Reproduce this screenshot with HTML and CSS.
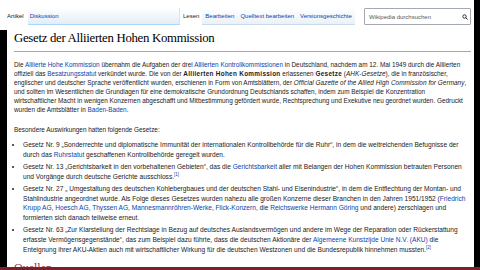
FILE: index.html
```html
<!DOCTYPE html>
<html lang="de">
<head>
    <meta charset="UTF-8">
    <meta name="viewport" content="width=device-width, initial-scale=1.0">
    <title>Gesetz der Alliierten Hohen Kommission</title>
    <link rel="stylesheet" href="styles.css">
</head>
<body>
    <div class="frame">
        <div class="edge-left"></div>
        <div class="page">
            <div class="tabs">
                <div class="tabs-left">
                    <span class="tab selected">Artikel</span>
                    <a class="tab grow" href="#">Diskussion</a>
                </div>
                <div class="tabs-right">
                    <span class="tab selected">Lesen</span>
                    <a class="tab" href="#">Bearbeiten</a>
                    <a class="tab" href="#">Quelltext bearbeiten</a>
                    <a class="tab" href="#">Versionsgeschichte</a>
                </div>
                <div class="search">
                    <span class="search-text">Wikipedia durchsuchen</span>
                    <svg class="search-icon" width="6" height="6" viewBox="0 0 12 12">
                        <circle cx="5" cy="5" r="3.4" fill="none" stroke="#222" stroke-width="1.8"/>
                        <line x1="7.4" y1="7.4" x2="11" y2="11" stroke="#222" stroke-width="2"/>
                    </svg>
                </div>
            </div>

            <div class="content">
                <h1>Gesetz der Alliierten Hohen Kommission</h1>

                <p>Die <a href="#">Alliierte Hohe Kommission</a> übernahm die Aufgaben der drei <a href="#">Alliierten</a> <a href="#">Kontrollkommissionen</a> in Deutschland, nachdem am 12. Mai 1949 durch die Alliierten offiziell das <a href="#">Besatzungsstatut</a> verkündet wurde. Die von der <b>Alliierten Hohen Kommission</b> erlassenen <b>Gesetze</b> (<i>AHK-Gesetze</i>), die in französischer, englischer und deutscher Sprache veröffentlicht wurden, erschienen in Form von Amtsblättern, der <i>Official Gazette of the Allied High Commission for Germany</i>, und sollten im Wesentlichen die Grundlagen für eine demokratische Grundordnung Deutschlands schaffen, indem zum Beispiel die Konzentration<br>wirtschaftlicher Macht in wenigen Konzernen abgeschafft und Mitbestimmung gefördert wurde, Rechtsprechung und Exekutive neu geordnet wurden. Gedruckt<br>wurden die Amtsblätter in <a href="#">Baden-Baden</a>.</p>

                <p class="lead">Besondere Auswirkungen hatten folgende Gesetze:</p>

                <ul>
                    <li>Gesetz Nr. 9 „Sonderrechte und diplomatische Immunität der internationalen Kontrollbehörde für die Ruhr“, in dem die weitreichenden Befugnisse der durch das <a href="#">Ruhrstatut</a> geschaffenen Kontrollbehörde geregelt wurden.</li>
                    <li>Gesetz Nr. 13 „Gerichtsbarkeit in den vorbehaltenen Gebieten“, das die <a href="#">Gerichtsbarkeit</a> aller mit Belangen der Hohen Kommission betrauten Personen und Vorgänge durch deutsche Gerichte ausschloss.<sup>[1]</sup></li>
                    <li>Gesetz Nr. 27 „ Umgestaltung des deutschen Kohlebergbaues und der deutschen Stahl- und Eisenindustrie“, in dem die Entflechtung der Montan- und Stahlindustrie angeordnet wurde. Als Folge dieses Gesetzes wurden nahezu alle großen Konzerne dieser Branchen in den Jahren 1951/1952 (<a href="#">Friedrich Krupp AG</a>, <a href="#">Hoesch AG</a>, <a href="#">Thyssen AG</a>, <a href="#">Mannesmannröhren-Werke</a>, <a href="#">Flick-Konzern</a>, die <a href="#">Reichswerke Hermann Göring</a> und andere) zerschlagen und formierten sich danach teilweise erneut.</li>
                    <li>Gesetz Nr. 63 „Zur Klarstellung der Rechtslage in Bezug auf deutsches Auslandsvermögen und andere im Wege der Reparation oder Rückerstattung erfasste Vermögensgegenstände“, das zum Beispiel dazu führte, dass die deutschen Aktionäre der <a href="#">Algemeene Kunstzijde Unie N.V. (AKU)</a> die Enteignung ihrer AKU-Aktien auch mit wirtschaftlicher Wirkung für die deutschen Westzonen und die Bundesrepublik hinnehmen mussten.<sup>[2]</sup></li>
                </ul>

                <h2>Quellen</h2>
            </div>
        </div>
        <div class="edge-right"></div>
    </div>
    <div class="footer-line"></div>
</body>
</html>
```

FILE: styles.css
```css
body {
    margin: 0;
    height: 270px;
    overflow: hidden;
    font-family: "Liberation Sans", Arial, sans-serif;
    color: #202122;
    background-color: #fff;
}
a {
    color: #0645ad;
    text-decoration: none;
}
.frame {
    display: grid;
    grid-template-columns: 7px 1fr 6px;
    height: 267px;
    overflow: hidden;
}
.edge-left {
    background: linear-gradient(#fff 30px, #000 30px);
}
.edge-right {
    background-color: #000;
}
.page {
    overflow: hidden;
}
.tabs {
    display: flex;
    align-items: flex-end;
    height: 25px;
    padding-right: 3px;
    font-size: 6px;
}
.tabs-left {
    display: flex;
    width: 173px;
}
.tabs-right {
    display: flex;
    flex: 1;
}
.tab {
    display: block;
    height: 17px;
    padding: 5px 4px 0 0;
    line-height: 7px;
    box-sizing: border-box;
    white-space: nowrap;
}
.tab.grow {
    flex: 1;
    padding-left: 2px;
    background: linear-gradient(to top, #e3edf5, #fff);
    border-right: 1px solid #d8e3ec;
    border-bottom: 1px solid #a7d7f9;
}
.tabs-right .tab {
    padding: 5px 3px 0;
    background: linear-gradient(to top, #eaf1f7, #fff);
    border-bottom: 1px solid #c8dcec;
}
.tabs-right .tab.selected {
    background: #fff;
    border-bottom-color: #fff;
}
.search {
    display: flex;
    align-items: center;
    justify-content: space-between;
    width: 107px;
    height: 17px;
    margin-left: 3px;
    padding: 0 2px 0 4px;
    box-sizing: border-box;
    border: 1px solid #a2a9b1;
    border-radius: 1px;
    color: #54595d;
}
.content {
    padding: 0 3px 0 7px;
}
h1 {
    margin: 5px 0 0;
    padding-bottom: 5px;
    border-bottom: 1px solid #a2a9b1;
    font-family: "Liberation Serif", "Times New Roman", serif;
    font-weight: normal;
    font-size: 12.8px;
    letter-spacing: -0.3px;
    line-height: 16px;
    color: #000;
}
p {
    margin: 8px 0 0;
    font-size: 6.4px;
    line-height: 9px;
}
p b {
    letter-spacing: 0.3px;
}
p i {
    letter-spacing: 0.05px;
}
p.lead {
    margin: 11px 0 6px;
}
ul {
    margin: 0;
    padding-left: 9px;
    font-size: 6.6px;
    line-height: 9.7px;
}
li {
    margin-bottom: 2.5px;
}
sup {
    font-size: 4.5px;
    line-height: 1;
    color: #0645ad;
}
h2 {
    margin: 7px 0 0;
    font-family: "Liberation Serif", "Times New Roman", serif;
    font-weight: normal;
    font-size: 12px;
    color: #a0303c;
}
.footer-line {
    height: 3px;
    background-color: #7a1f2b;
}
```
